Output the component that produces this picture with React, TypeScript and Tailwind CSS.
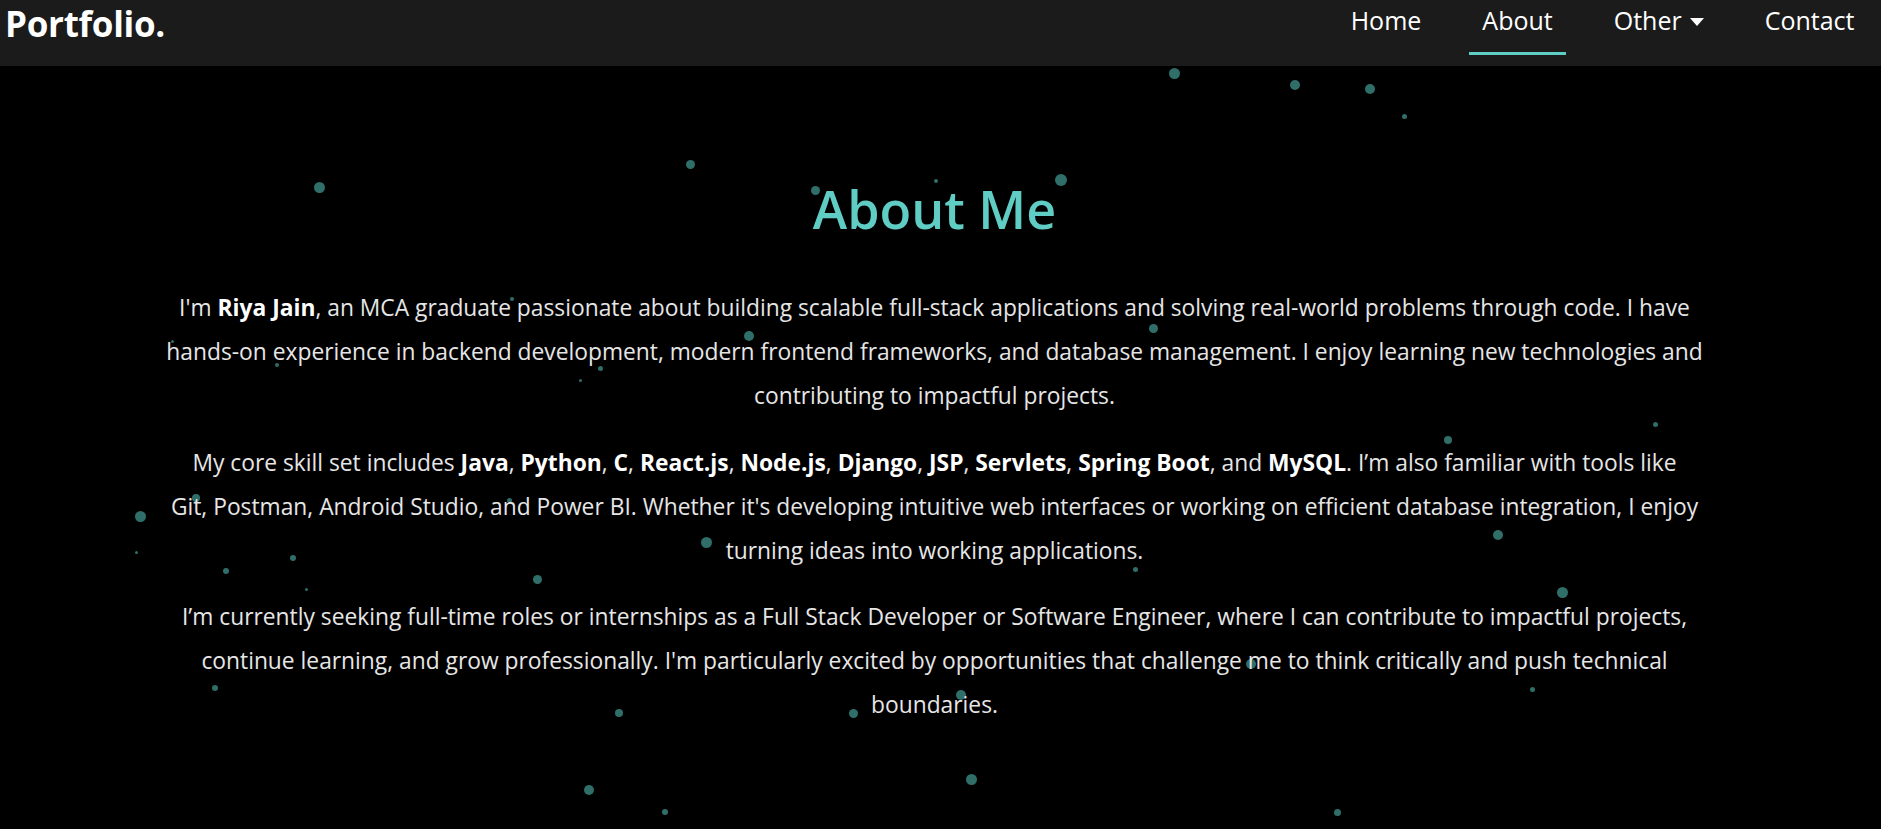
import React from "react";

const DOTS: [number, number, number][] = [
  [1174, 73, 11], [1295, 85, 10], [1370, 89, 10], [1404, 116, 5],
  [690, 164, 9], [319, 187, 11], [815, 190, 9], [936, 181, 4], [1061, 180, 12],
  [512, 299, 4], [749, 336, 10], [1153, 328, 9], [172, 341, 3], [277, 365, 4],
  [600, 368, 5], [580, 380, 3], [1655, 424, 5], [1448, 440, 8], [1687, 359, 2],
  [196, 498, 8], [509, 500, 5], [140, 516, 11], [1498, 535, 10], [706, 542, 11],
  [136, 552, 3], [293, 558, 6], [226, 571, 6], [1135, 569, 5], [537, 579, 9],
  [306, 589, 3], [1562, 592, 11], [1251, 664, 10], [215, 688, 6], [1532, 689, 5],
  [961, 695, 10], [619, 713, 8], [853, 713, 9], [971, 779, 11], [589, 790, 10],
  [665, 812, 6], [1337, 812, 7],
];

const B = ({ children }: { children: React.ReactNode }) => (
  <strong className="font-bold text-white">{children}</strong>
);

export default function App() {
  return (
    <div className="min-h-screen bg-black font-['Open_Sans',sans-serif] overflow-hidden">
      <nav className="h-[66px] bg-[#1b1b1b] flex items-start justify-between pl-[5px] pr-[13px]">
        <a className="block pt-[6px] text-[35px] leading-none font-bold text-white tracking-[-0.3px]">Portfolio.</a>
        <ul className="flex items-start gap-[34px] text-white text-[25px] leading-none">
          <li>
            <a className="relative block h-[66px] px-[13.5px] pt-[8px]">Home</a>
          </li>
          <li>
            <a className="relative block h-[66px] px-[13.5px] pt-[8px]">
              About
              <span className="absolute left-0 right-0 top-[52px] h-[3px] bg-[#5fcdc4]" />
            </a>
          </li>
          <li>
            <a className="relative flex items-start h-[66px] px-[13.5px] pt-[8px]">
              Other
              <span className="ml-[8px] mt-[10px] w-0 h-0 border-l-[7px] border-r-[7px] border-t-[8px] border-l-transparent border-r-transparent border-t-white" />
            </a>
          </li>
          <li>
            <a className="relative block h-[66px] px-[13.5px] pt-[8px]">Contact</a>
          </li>
        </ul>
      </nav>
      <main className="relative h-[763px]">
        {DOTS.map(([x, y, d], i) => (
          <span
            key={i}
            className="absolute rounded-full bg-[#2f6e69]"
            style={{ left: x - d / 2, top: y - 66 - d / 2, width: d, height: d }}
          />
        ))}
        <div className="relative flex flex-col items-center pr-[12px] pt-[112px] text-center">
          <h2 className="text-[52px] leading-[1.2] font-semibold text-[#5fcdc4]">About Me</h2>
          <div className="mt-[46px] text-[22.8px] leading-[44px] text-[#e6e6e6] whitespace-nowrap">
            <p>
              <span className="block">
                I'm <B>Riya Jain</B>, an MCA graduate passionate about building scalable full-stack applications and solving real-world problems through code. I have
              </span>
              <span className="block">
                hands-on experience in backend development, modern frontend frameworks, and database management. I enjoy learning new technologies and
              </span>
              <span className="block">contributing to impactful projects.</span>
            </p>
            <p className="mt-[23px]">
              <span className="block">
                My core skill set includes <B>Java</B>, <B>Python</B>, <B>C</B>, <B>React.js</B>, <B>Node.js</B>, <B>Django</B>, <B>JSP</B>, <B>Servlets</B>, <B>Spring Boot</B>, and <B>MySQL</B>. I’m also familiar with tools like
              </span>
              <span className="block">
                Git, Postman, Android Studio, and Power BI. Whether it's developing intuitive web interfaces or working on efficient database integration, I enjoy
              </span>
              <span className="block">turning ideas into working applications.</span>
            </p>
            <p className="mt-[22px]">
              <span className="block">
                I’m currently seeking full-time roles or internships as a Full Stack Developer or Software Engineer, where I can contribute to impactful projects,
              </span>
              <span className="block">
                continue learning, and grow professionally. I'm particularly excited by opportunities that challenge me to think critically and push technical
              </span>
              <span className="block">boundaries.</span>
            </p>
          </div>
        </div>
      </main>
    </div>
  );
}
